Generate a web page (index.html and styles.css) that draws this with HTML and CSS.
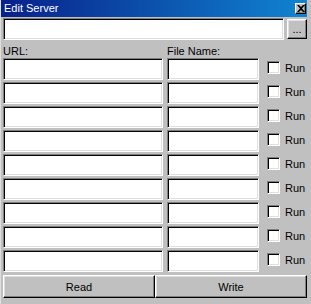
FILE: index.html
```html
<!DOCTYPE html>
<html lang="en">
<head>
    <meta charset="UTF-8">
    <title>Edit Server</title>
    <link rel="stylesheet" href="styles.css">
</head>
<body>
    <div class="window">
        <div class="titlebar">
            <span class="title">Edit Server</span>
            <span class="close-btn">
                <svg width="8" height="7" viewBox="0 0 8 7">
                    <path d="M0 0h2l2 2 2-2h2L5 3.5 8 7H6L4 5 2 7H0l3-3.5z" fill="#000"/>
                </svg>
            </span>
        </div>

        <div class="content">
            <div class="path-row">
                <div class="field"></div>
                <div class="btn btn-browse">...</div>
            </div>

            <div class="labels">
                <span>URL:</span>
                <span>File Name:</span>
            </div>

            <div class="rows" id="rows"></div>

            <div class="actions">
                <div class="btn">Read</div>
                <div class="btn">Write</div>
            </div>
        </div>
    </div>

    <script>
        const rows = document.getElementById('rows');
        for (let i = 0; i < 9; i++) {
            const row = document.createElement('div');
            row.className = 'server-row';
            row.innerHTML =
                '<div class="field"></div>' +
                '<div class="field"></div>' +
                '<label class="run"><span class="checkbox"></span>Run</label>';
            rows.appendChild(row);
        }
    </script>
</body>
</html>
```

FILE: styles.css
```css
body {
    margin: 0;
    background-color: #c0c0c0;
    font-family: "Liberation Sans", Arial, sans-serif;
    font-size: 11px;
    color: #000;
}
.window {
    width: 311px;
    height: 304px;
    box-sizing: border-box;
    padding: 0 4px 0 1px;
    border-left: 1px solid #dfdfdf;
    overflow: hidden;
}
.titlebar {
    height: 17px;
    display: flex;
    align-items: center;
    justify-content: space-between;
    padding: 0 1px 0 3px;
    margin-left: -1px;
    background: linear-gradient(to right, #08208a, #1084d0);
}
.title {
    color: #fff;
    line-height: 17px;
}
.close-btn {
    width: 9px;
    height: 9px;
    display: flex;
    align-items: center;
    justify-content: center;
    background-color: #c0c0c0;
    border: 1px solid;
    border-color: #fff #000 #000 #fff;
    box-shadow: inset -1px -1px #808080;
}
.content {
    padding-left: 1px;
}
.path-row {
    display: flex;
    align-items: center;
    gap: 3px;
    margin-top: 1px;
}
.path-row .field {
    flex: 1;
}
.field {
    height: 22px;
    box-sizing: border-box;
    background-color: #fff;
    border: 1px solid;
    border-color: #808080 #fff #fff #808080;
    box-shadow: inset 1px 1px #000, inset -1px -1px #dfdfdf;
}
.btn {
    height: 23px;
    box-sizing: border-box;
    display: flex;
    align-items: center;
    justify-content: center;
    background-color: #c0c0c0;
    border: 1px solid;
    border-color: #fff #000 #000 #fff;
    box-shadow: inset -1px -1px #808080, inset 1px 1px #dfdfdf;
}
.btn-browse {
    width: 20px;
    height: 20px;
    align-items: flex-end;
    padding-bottom: 3px;
}
.labels {
    display: grid;
    grid-template-columns: 160px 92px;
    column-gap: 4px;
    height: 18px;
    box-sizing: border-box;
    padding-top: 5px;
    line-height: 13px;
}
.server-row {
    display: grid;
    grid-template-columns: 160px 92px 1fr;
    column-gap: 4px;
    height: 24px;
}
.run {
    display: flex;
    align-items: flex-start;
    gap: 5px;
    padding: 3px 0 0 4px;
    line-height: 14px;
}
.checkbox {
    width: 13px;
    height: 13px;
    box-sizing: border-box;
    background-color: #fff;
    border: 1px solid;
    border-color: #808080 #fff #fff #808080;
    box-shadow: inset 1px 1px #000, inset -1px -1px #dfdfdf;
}
.actions {
    display: grid;
    grid-template-columns: 1fr 1fr;
    margin-top: 1px;
}
```
